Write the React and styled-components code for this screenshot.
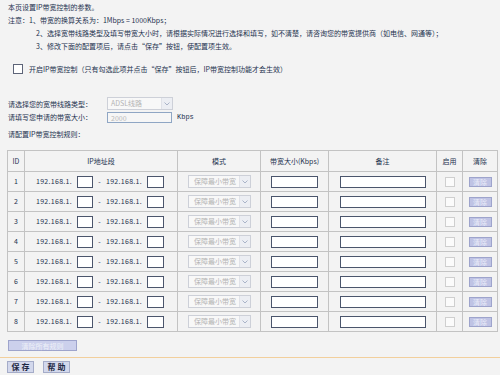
import React from 'react'
import styled, { createGlobalStyle } from 'styled-components'

const GlobalStyle = createGlobalStyle`
  html, body {
    margin: 0;
    padding: 0;
    background: #f3f3f3;
  }
  body {
    font-family: "Noto Sans CJK SC", "Liberation Sans", sans-serif;
    font-size: 7px;
    color: #23324f;
  }
`

const Page = styled.div`
  width: 500px;
  height: 375px;
  box-sizing: border-box;
  padding: 1px 3px 0 7px;
  overflow: hidden;
`

// Notes at the top
const Notes = styled.div`
  padding-left: 1px;
`

const Line = styled.div`
  height: 13px;
  line-height: 13px;
  white-space: nowrap;
  padding-left: ${props => (props.$indent ? '28px' : '0')};
`

const CheckRow = styled.label`
  display: flex;
  align-items: center;
  gap: 6px;
  height: 13px;
  margin-top: 9px;
  padding-left: 6px;
  white-space: nowrap;
`

const Tick = styled.span`
  width: 8px;
  height: 8px;
  border: 1px solid #5d6478;
  background: #fff;
  flex: none;
`

// Line type / bandwidth form
const Form = styled.div`
  display: grid;
  grid-template-columns: 99px auto;
  align-items: center;
  row-gap: 1px;
  margin-top: 22px;
  padding-left: 1px;
`

const Label = styled.span`
  white-space: nowrap;
  line-height: 12px;
`

const SelectBox = styled.div`
  display: flex;
  align-items: stretch;
  width: ${props => props.$width || 65}px;
  height: ${props => props.$height || 13}px;
  box-sizing: border-box;
  border: 1px solid #cdd0d8;
  background: #f8f8f8;
  color: #b4b4b4;
`

const SelectText = styled.span`
  flex: 1;
  padding-left: 3px;
  line-height: 11px;
  white-space: nowrap;
  overflow: hidden;
`

const Arrow = styled.span`
  width: 10px;
  display: flex;
  align-items: center;
  justify-content: center;
  background: #eceef3;
  border-left: 1px solid #e0e2e8;
`

const Field = styled.div`
  display: flex;
  align-items: center;
  gap: 5px;
`

const TextBox = styled.span`
  display: inline-block;
  box-sizing: border-box;
  width: ${props => props.$width}px;
  height: ${props => props.$height || 12}px;
  border: 1px solid ${props => (props.$disabled ? '#8fa6c4' : '#4b556c')};
  background: ${props => (props.$disabled ? '#f6f6f6' : '#fff')};
  color: #b9b9b9;
  padding-left: 3px;
  line-height: 10px;
  flex: none;
`

const Unit = styled.span`
  font-family: "Liberation Mono", monospace;
  font-size: 7px;
`

const Heading = styled.div`
  margin-top: 5px;
  height: 13px;
  line-height: 13px;
  padding-left: 1px;
`

// Rule table
const Table = styled.table`
  margin-top: 9px;
  width: 490px;
  table-layout: fixed;
  border-collapse: collapse;
  border: 1px solid #c3c3c3;
  line-height: 11px;
`

const Head = styled.th`
  height: 21px;
  box-sizing: border-box;
  border: 1px solid #c3c3c3;
  font-weight: normal;
  text-align: center;
  padding: 0;
  white-space: nowrap;
`

const Cell = styled.td`
  height: 20px;
  box-sizing: border-box;
  border: 1px solid #c3c3c3;
  padding: 0;
  text-align: ${props => props.$align || 'center'};
  padding-left: ${props => props.$pad || 0}px;
  vertical-align: middle;
`

const IpGroup = styled.div`
  display: flex;
  align-items: center;
  white-space: nowrap;
  gap: 2px;
`

const Octets = styled.span`
  width: 39px;
  letter-spacing: 0.3px;
`

const Dash = styled.span`
  width: 9px;
  text-align: center;
`

const Centered = styled.div`
  display: flex;
  justify-content: center;
  align-items: center;
`

const Box = styled.span`
  width: 8px;
  height: 8px;
  border: 1px solid #cfcfcf;
  background: #fbfbfb;
`

const SmallButton = styled.span`
  display: inline-flex;
  align-items: center;
  justify-content: center;
  box-sizing: border-box;
  width: ${props => props.$width}px;
  height: ${props => props.$height}px;
  background: #bfc3e4;
  border: 1px solid #9ea4cc;
  color: #eceefa;
  font-size: 7px;
  line-height: 8px;
  white-space: nowrap;
`

const ClearAll = styled(SmallButton)`
  margin: 8px 0 0 1px;
  background: #ccd0ec;
  color: #eef0f8;
`

const Divider = styled.div`
  height: 1px;
  margin: 6px -3px 0 -7px;
  background: #f2cf9c;
`

const Actions = styled.div`
  display: flex;
  gap: 9px;
  margin-top: 3px;
`

const ActionButton = styled.span`
  display: inline-flex;
  align-items: center;
  justify-content: center;
  width: 27px;
  height: 12px;
  box-sizing: border-box;
  background: #d3d8ec;
  border: 1px solid #a5acc8;
  color: #1c2742;
  font-weight: bold;
  font-size: 8px;
  line-height: 10px;
  letter-spacing: 2px;
  padding-left: 2px;
`

const Chevron = () => (
  <svg width="6" height="4" viewBox="0 0 6 4">
    <path d="M0.5 0.5 L3 3 L5.5 0.5" fill="none" stroke="#aab4c8" strokeWidth="1" />
  </svg>
)

const rows = [1, 2, 3, 4, 5, 6, 7, 8]

export default function App() {
  return (
    <Page>
      <GlobalStyle />
      <Notes>
        <Line>本页设置IP带宽控制的参数。</Line>
        <Line>注意：1、带宽的换算关系为：1Mbps = 1000Kbps；</Line>
        <Line $indent>
          2、选择宽带线路类型及填写带宽大小时，请根据实际情况进行选择和填写，如不清楚，请咨询您的带宽提供商（如电信、网通等）；
        </Line>
        <Line $indent>3、修改下面的配置项后，请点击“保存”按钮，使配置项生效。</Line>
      </Notes>

      <CheckRow>
        <Tick />
        开启IP带宽控制（只有勾选此项并点击“保存”按钮后，IP带宽控制功能才会生效）
      </CheckRow>

      <Form>
        <Label>请选择您的宽带线路类型：</Label>
        <SelectBox $width={66}>
          <SelectText>ADSL线路</SelectText>
          <Arrow>
            <Chevron />
          </Arrow>
        </SelectBox>
        <Label>请填写您申请的带宽大小：</Label>
        <Field>
          <TextBox $width={65} $height={11} $disabled>
            2000
          </TextBox>
          <Unit>Kbps</Unit>
        </Field>
      </Form>

      <Heading>请配置IP带宽控制规则：</Heading>

      <Table>
        <colgroup>
          <col style={{ width: 17 }} />
          <col style={{ width: 153 }} />
          <col style={{ width: 83 }} />
          <col style={{ width: 68 }} />
          <col style={{ width: 108 }} />
          <col style={{ width: 26 }} />
          <col style={{ width: 35 }} />
        </colgroup>
        <thead>
          <tr>
            <Head>ID</Head>
            <Head>IP地址段</Head>
            <Head>模式</Head>
            <Head>带宽大小(Kbps)</Head>
            <Head>备注</Head>
            <Head>启用</Head>
            <Head>清除</Head>
          </tr>
        </thead>
        <tbody>
          {rows.map(id => (
            <tr key={id}>
              <Cell>{id}</Cell>
              <Cell $align="left" $pad={11}>
                <IpGroup>
                  <Octets>192.168.1.</Octets>
                  <TextBox $width={16} />
                  <Dash>-</Dash>
                  <Octets>192.168.1.</Octets>
                  <TextBox $width={17} />
                </IpGroup>
              </Cell>
              <Cell>
                <Centered>
                  <SelectBox $width={63} $height={13}>
                    <SelectText>保障最小带宽</SelectText>
                    <Arrow>
                      <Chevron />
                    </Arrow>
                  </SelectBox>
                </Centered>
              </Cell>
              <Cell>
                <Centered>
                  <TextBox $width={47} />
                </Centered>
              </Cell>
              <Cell>
                <Centered>
                  <TextBox $width={86} />
                </Centered>
              </Cell>
              <Cell>
                <Centered>
                  <Box />
                </Centered>
              </Cell>
              <Cell>
                <Centered>
                  <SmallButton $width={23} $height={10}>
                    清除
                  </SmallButton>
                </Centered>
              </Cell>
            </tr>
          ))}
        </tbody>
      </Table>

      <ClearAll $width={69} $height={11}>
        清除所有规则
      </ClearAll>

      <Divider />

      <Actions>
        <ActionButton>保存</ActionButton>
        <ActionButton>帮助</ActionButton>
      </Actions>
    </Page>
  )
}
